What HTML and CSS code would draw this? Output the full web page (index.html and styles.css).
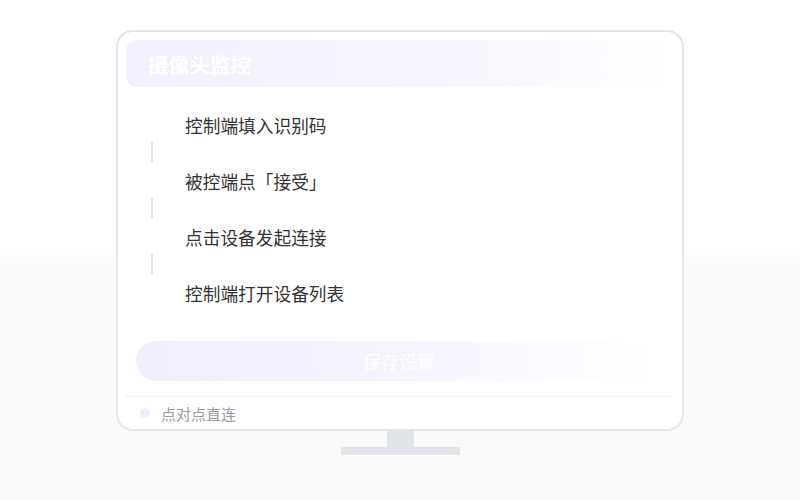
FILE: index.html
```html
<!DOCTYPE html>
<html lang="zh-CN">
	<head>
		<meta charset="utf-8">
		<link rel="stylesheet" href="styles.css">
	</head>

	<body>
		<div class="stage">
			<div class="monitor">
				<div class="screen">
					<div class="head">
						<h2>摄像头监控</h2>
						<span class="state">已连接</span>
					</div>

					<ul class="steps">
						<li>控制端填入识别码</li>
						<li class="link"></li>
						<li>被控端点「接受」</li>
						<li class="link"></li>
						<li>点击设备发起连接</li>
						<li class="link"></li>
						<li>控制端打开设备列表</li>
					</ul>

					<button class="save">保存设置</button>

					<div class="foot">
						<span class="dot"></span>
						<span>点对点直连</span>
					</div>
				</div>
				<div class="neck"></div>
				<div class="base"></div>
			</div>
		</div>
	</body>
</html>
```

FILE: styles.css
```css
html, body {
	margin: 0;
	height: 100%;
}

body {
	font-family: "Noto Sans CJK SC", "Noto Sans", sans-serif;
	background: linear-gradient(to bottom, #fff 0%, #fff 49%, #fafafb 53%, #fafafb 100%);
}

.stage {
	padding-top: 30px;
	display: flex;
	justify-content: center;
}

.monitor {
	width: 568px;
	display: flex;
	flex-direction: column;
	align-items: center;
}

.screen {
	box-sizing: border-box;
	width: 568px;
	height: 401px;
	border: 2px solid #e3e5ea;
	border-radius: 17px;
	background: #fff;
	padding: 8px 10px 0 8px;
	display: flex;
	flex-direction: column;
}

.screen > * {
	flex-shrink: 0;
}

.head {
	height: 47px;
	border-radius: 11px;
	background: linear-gradient(to right, #f2effe 0%, #f6f4ff 45%, #fbfaff 80%, #fff 100%);
	display: flex;
	align-items: center;
	justify-content: space-between;
	padding: 0 30px 0 22px;
}

.head h2 {
	margin: 0;
	font-size: 20.6px;
	font-weight: bold;
	color: #fff;
}

.state {
	font-size: 14px;
	color: #fff;
}

.steps {
	list-style: none;
	margin: 24px 0 0;
	padding: 0;
}

.steps li {
	height: 28px;
	line-height: 28px;
	padding-left: 59px;
	font-size: 17.7px;
	color: #333;
}

.steps .link {
	box-sizing: border-box;
	padding: 3px 0 0;
	height: 28px;
}

.steps .link::before {
	content: "";
	display: block;
	width: 2px;
	height: 20px;
	margin-left: 25px;
	background: #e4e4ee;
}

.save {
	margin: 34px 10px 0;
	height: 40px;
	border: none;
	border-radius: 20px;
	background: linear-gradient(to right, #f1eefe 0%, #f4f2ff 40%, #fbfaff 75%, #fff 100%);
	color: #fff;
	font-family: inherit;
	font-size: 18px;
}

.foot {
	margin-top: 15px;
	border-top: 1px solid #eceef1;
	height: 32px;
	display: flex;
	align-items: center;
	padding-left: 14px;
	font-size: 15px;
	color: #9b9ba6;
}

.dot {
	width: 10px;
	height: 10px;
	border-radius: 50%;
	background: #efecfd;
	margin-right: 11px;
}

.neck {
	width: 27px;
	height: 16px;
	background: #e1e4e8;
}

.base {
	width: 119px;
	height: 8px;
	background: #e1e4e8;
}
```
